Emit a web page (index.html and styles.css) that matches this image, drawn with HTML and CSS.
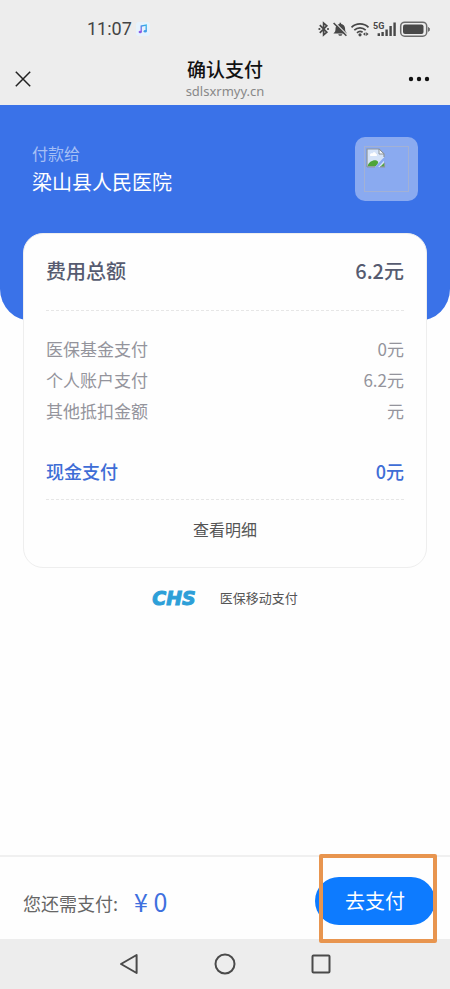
FILE: index.html
```html
<!DOCTYPE html>
<html lang="zh-CN">
<head>
<meta charset="utf-8">
<meta name="viewport" content="width=device-width, initial-scale=1">
<title>确认支付</title>
<link rel="stylesheet" href="styles.css">
</head>
<body>
<header class="topbar">
  <div class="status">
    <div class="status-left">
      <span class="clock">11:07</span>
      <svg class="music" width="14" height="14" viewBox="0 0 14 14" aria-hidden="true">
        <defs><linearGradient id="note" x1="0" y1="1" x2="1" y2="0"><stop offset="0" stop-color="#a04fe0"/><stop offset="0.5" stop-color="#3f8fe8"/><stop offset="1" stop-color="#35b8e8"/></linearGradient></defs>
        <rect width="14" height="14" rx="3" fill="#e6f3fd"/>
        <path d="M5.2 10V4l5-1v6" fill="none" stroke="url(#note)" stroke-width="1.3"/>
        <ellipse cx="4.2" cy="10" rx="1.6" ry="1.3" fill="#8a5be4"/>
        <ellipse cx="9.2" cy="9.2" rx="1.6" ry="1.3" fill="#3f9de8"/>
      </svg>
    </div>
    <svg class="signals" width="113" height="18" viewBox="0 0 113 18" aria-hidden="true">
      <path d="M1.800 5.200l7 7L5.600 15V3l3.200 2.800-7 7" fill="none" stroke="#484848" stroke-width="1.700"/>
      <circle cx="1.400" cy="9" r="1.100" fill="#484848"/><circle cx="10" cy="9" r="1.100" fill="#484848"/>
      <path d="M15.400 13.400c2-1.400 2.100-2.600 2.100-4.600 0-2.800 1.600-4.500 4-4.800V2.800h1.600V4c2.400.3 4 2 4 4.800 0 2 .1 3.200 2.100 4.600zM20.300 14.200h4c-.2 1-.9 1.600-2 1.600s-1.800-.6-2-1.600z" fill="#484848"/>
      <path d="M17 2.600l12 12" stroke="#ededed" stroke-width="1.300"/>
      <path d="M15.600 3l12.800 12.800" stroke="#484848" stroke-width="1.600"/>
      <g fill="none" stroke="#484848" stroke-width="1.700">
        <path d="M33.500 7.300a12.200 12.200 0 0 1 17 0"/>
        <path d="M36.300 10.200a8.200 8.200 0 0 1 11.400 0"/>
        <path d="M39 12.800a4.600 4.600 0 0 1 5.600-.5"/>
      </g>
      <circle cx="42" cy="14.800" r="1.600" fill="#484848"/>
      <path d="M47.400 12.300v3.600l-2.400-1.800zM48.200 12.300v3.600l2.400-1.800z" fill="#484848"/>
      <text x="55" y="9" class="net">5G</text>
      <path d="M59.600 13.200h2.400v2.800h-2.400zM63.400 12h2.400v4h-2.400zM67.400 9.500h2.400V16h-2.400zM71.400 6h2.400v10h-2.400zM75.400 2.500h2.400V16h-2.400z" fill="#484848"/>
      <rect x="82.700" y="2.200" width="26" height="14" rx="4" fill="none" stroke="#6c6c6c" stroke-width="1.500"/>
      <rect x="85" y="4.500" width="20.500" height="9.500" rx="2" fill="#484848"/>
      <path d="M110.500 7.500c1.300.2 1.300 3.600 0 3.800z" fill="#6c6c6c" stroke="#6c6c6c"/>
    </svg>
  </div>
  <div class="titlebar">
    <button class="icon-btn" type="button" aria-label="关闭">
      <svg width="16" height="16" viewBox="0 0 16 16"><path d="M.8.800l14.400 14.400M15.200.800L.8 15.200" stroke="#222" stroke-width="1.500"/></svg>
    </button>
    <div class="heading">
      <h1>确认支付</h1>
      <p>sdlsxrmyy.cn</p>
    </div>
    <button class="icon-btn" type="button" aria-label="更多">
      <svg width="22" height="16" viewBox="0 0 22 16" fill="#111"><circle cx="3" cy="8" r="2.200"/><circle cx="11" cy="8" r="2.200"/><circle cx="19" cy="8" r="2.200"/></svg>
    </button>
  </div>
</header>

<main>
  <section class="payee">
    <div>
      <p class="payee-label">付款给</p>
      <p class="payee-name">梁山县人民医院</p>
    </div>
    <div class="avatar">
      <div class="avatar-frame">
        <svg width="20" height="20" viewBox="0 0 20 20" aria-hidden="true">
          <path d="M1 1h12l5 5v13H1z" fill="#d5e3f8"/>
          <path d="M1.500 18.500c1-5 6-7 9-6 2 .8 2 2 1 3.500l-2 2.500z" fill="#4ea53a"/>
          <path d="M4 7c0-2 2-2 2.500-1.500C7 3.500 10 4 10 6c1.500 0 1.500 2 0 2H5C4.200 8 4 7.500 4 7z" fill="#fff"/>
          <path d="M10 19.500l8.500-9" stroke="#8aaaf0" stroke-width="2.500"/>
          <path d="M14 19l4-4v4z" fill="#4ea53a"/>
          <path d="M1 19V1h12l5 5v3M1 18.800h8M14 18.800h4.500v-4" fill="none" stroke="#8d959c" stroke-width="1.200"/>
          <path d="M13 1v5h5z" fill="#f5f8fb" stroke="#8d959c"/>
        </svg>
      </div>
    </div>
  </section>

  <section class="card">
    <dl class="row total"><dt>费用总额</dt><dd>6.2元</dd></dl>
    <div class="details">
      <dl class="row"><dt>医保基金支付</dt><dd>0元</dd></dl>
      <dl class="row"><dt>个人账户支付</dt><dd>6.2元</dd></dl>
      <dl class="row"><dt>其他抵扣金额</dt><dd>元</dd></dl>
    </div>
    <dl class="row cash"><dt>现金支付</dt><dd>0元</dd></dl>
    <button class="detail-btn" type="button">查看明细</button>
  </section>

  <div class="brand"><span class="brand-logo">CHS</span><span>医保移动支付</span></div>
</main>

<footer>
  <div class="paybar">
    <p class="due">您还需支付:</p>
    <p class="amount">¥ 0</p>
    <div class="pay">
      <button class="pay-btn" type="button">去支付</button>
      <span class="marker"></span>
    </div>
  </div>
  <nav class="sysnav" aria-label="系统导航">
    <button class="icon-btn" type="button" aria-label="返回"><svg width="22" height="22" viewBox="0 0 22 22"><path d="M18.600 2v18L3 11z"/></svg></button>
    <button class="icon-btn" type="button" aria-label="主页"><svg width="22" height="22" viewBox="0 0 22 22"><circle cx="11" cy="11" r="9.500"/></svg></button>
    <button class="icon-btn" type="button" aria-label="最近任务"><svg width="22" height="22" viewBox="0 0 22 22"><rect x="2.500" y="2.500" width="17" height="17" rx="1"/></svg></button>
  </nav>
</footer>
</body>
</html>
```

FILE: styles.css
```css
* {
  box-sizing: border-box;
  margin: 0;
  padding: 0;
}

body {
  display: flex;
  flex-direction: column;
  min-height: 100vh;
  background: #fefefe;
  color: #555;
  font-family: "Noto Sans CJK SC", sans-serif;
}

button {
  border: 0;
  background: none;
  font-family: inherit;
  cursor: pointer;
}

svg {
  display: block;
}

.topbar {
  background: #ededed;
}

.status {
  display: flex;
  align-items: center;
  justify-content: space-between;
  height: 48px;
  padding: 19px 19px 9px 87px;
}

.status-left {
  display: flex;
  align-items: center;
  gap: 4px;
}

.clock {
  color: #444;
  font: 18px/20px Roboto, sans-serif;
}

.net {
  fill: #484848;
  font: bold 9px Roboto, sans-serif;
}

.titlebar {
  display: grid;
  grid-template-columns: 1fr auto 1fr;
  align-items: center;
  height: 57px;
  padding: 4px 20px 0 15px;
}

.titlebar .icon-btn:last-child {
  justify-self: end;
}

.heading {
  padding-left: 5px;
  text-align: center;
}

.heading h1 {
  color: #111;
  font-size: 19px;
  font-weight: 500;
  line-height: 24px;
}

.heading p {
  color: #888;
  font: 13px/20px "Noto Sans", sans-serif;
}

.payee {
  display: flex;
  align-items: flex-start;
  justify-content: space-between;
  height: 216px;
  padding: 32px 32px 0;
  border-radius: 0 0 32px 32px;
  background: #3a72e8;
}

.payee-label {
  padding-top: 4px;
  color: #a5bff5;
  font-size: 16px;
  line-height: 24px;
}

.payee-name {
  color: #fff;
  font-size: 20px;
  line-height: 34px;
}

.avatar {
  width: 63px;
  height: 64px;
  padding: 9px;
  border-radius: 10px;
  background: #8aaaf0;
}

.avatar-frame {
  height: 46px;
  padding: 1px;
  border: 1px solid #a3b1d4;
}

.card {
  margin: -88px 23px 0;
  padding: 0 22px;
  border: 1px solid #eee;
  border-radius: 20px;
  background: #fefefe;
}

.row {
  display: flex;
  justify-content: space-between;
  font-size: 17px;
  line-height: 31px;
}

.total {
  padding: 21px 0 24px;
  border-bottom: 1px dashed #e6e6e6;
  color: #565b70;
  font-size: 20px;
  font-weight: 500;
}

.details {
  padding: 22px 0 30px;
  color: #94949c;
}

.cash {
  padding-bottom: 12px;
  border-bottom: 1px dashed #e6e6e6;
  color: #3e6dd6;
  font-size: 18px;
  font-weight: 500;
}

.detail-btn {
  display: block;
  width: 100%;
  padding: 13px 0 22px;
  color: #555;
  font-size: 16px;
  line-height: 32px;
}

.brand {
  display: flex;
  align-items: center;
  justify-content: center;
  gap: 24px;
  padding-top: 20px;
  font-size: 13px;
  line-height: 20px;
}

.brand-logo {
  color: #2d9fd8;
  font: italic bold 19px/20px "DejaVu Sans", sans-serif;
  -webkit-text-stroke: 1px #2d9fd8;
}

main {
  flex: 1;
}

.paybar {
  display: flex;
  align-items: center;
  height: 84px;
  padding: 6px 15px 0 23px;
  border-top: 2px solid #f0f0f0;
}

.due {
  padding-top: 4px;
  color: #666;
  font-size: 18px;
}

.amount {
  flex: 1;
  padding-left: 16px;
  color: #3e70de;
  font-size: 25px;
}

.pay {
  position: relative;
}

.pay-btn {
  display: block;
  width: 120px;
  height: 48px;
  padding-bottom: 2px;
  border-radius: 24px;
  background: #0d7bff;
  color: #fff;
  font-size: 20px;
}

.marker {
  position: absolute;
  inset: -23px -2px -18px 4px;
  border: 4px solid #e8954f;
  border-radius: 2px;
  pointer-events: none;
}

.sysnav {
  display: flex;
  justify-content: center;
  gap: 74px;
  height: 50px;
  background: #ededed;
}

.sysnav svg {
  fill: none;
  stroke: #4a4a4a;
  stroke-width: 2;
  stroke-linejoin: round;
}
```
